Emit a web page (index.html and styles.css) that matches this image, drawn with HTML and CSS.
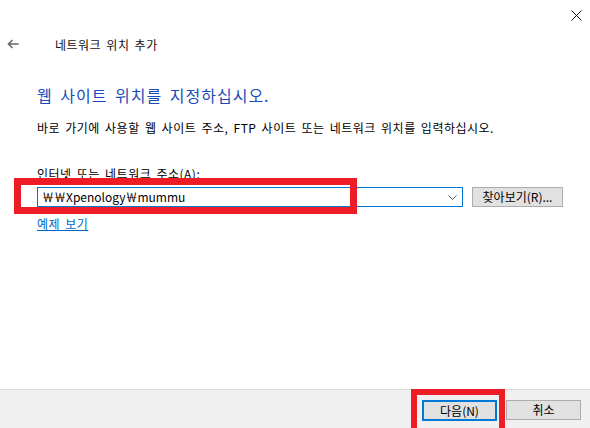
FILE: index.html
```html
<!DOCTYPE html>
<html>
	<head>
		<title>네트워크 위치 추가</title>
		<meta http-equiv="Content-Type" content="text/html; charset=UTF-8">
		<link rel="stylesheet" href="styles.css">
	</head>

	<body>
		<div class="window">
			<div class="titlebar">
				<svg class="close" width="11" height="11" viewBox="0 0 11 11">
					<path d="M0.5 0.5L10.5 10.5M10.5 0.5L0.5 10.5" fill="none" stroke="#111" stroke-width="1"/>
				</svg>
			</div>
			<div class="nav">
				<svg class="back" width="12" height="10" viewBox="0 0 12 10">
					<path d="M11.5 5H1.5M5.5 1L1.5 5L5.5 9" fill="none" stroke="#666" stroke-width="1.6"/>
				</svg>
				<span class="navTitle">네트워크 위치 추가</span>
			</div>

			<div class="content">
				<h1 class="mainInstr">웹 사이트 위치를 지정하십시오.</h1>
				<p class="desc">바로 가기에 사용할 웹 사이트 주소, FTP 사이트 또는 네트워크 위치를 입력하십시오.</p>
				<div class="field">
					<label class="fieldLabel">인터넷 또는 네트워크 주소(A):</label>
					<div class="row">
						<div class="combo">
							<span class="comboText">&#xFFE6;&#xFFE6;Xpenology&#xFFE6;mummu</span>
							<svg class="chevron" width="9" height="5" viewBox="0 0 9 5">
								<path d="M0.5 0.5L4.5 4.5L8.5 0.5" fill="none" stroke="#555" stroke-width="1"/>
							</svg>
						</div>
						<button class="btn browse">찾아보기(R)...</button>
					</div>
					<a class="example" href="#">예제 보기</a>
					<div class="mark markAddr"></div>
				</div>
			</div>

			<div class="footer">
				<div class="btnWrap">
					<button class="btn btnDefault">다음(N)</button>
					<div class="mark markNext"></div>
				</div>
				<button class="btn">취소</button>
			</div>
		</div>
	</body>
</html>
```

FILE: styles.css
```css
html, body {
	margin: 0;
	padding: 0;
	background: #fff;
}

body {
	font-family: "Noto Sans CJK KR", "Noto Sans", sans-serif;
	font-size: 12px;
	color: #000;
	letter-spacing: 0.5px;
	word-spacing: 2px;
}

.window {
	width: 590px;
	height: 428px;
	display: flex;
	flex-direction: column;
	overflow: hidden;
}

.titlebar {
	height: 30px;
	display: flex;
	justify-content: flex-end;
	align-items: flex-start;
	padding-right: 8px;
}

.close {
	display: block;
	margin-top: 10px;
}

.nav {
	height: 28px;
	display: flex;
	align-items: center;
	padding-left: 7px;
}

.back {
	display: block;
}

.navTitle {
	margin-left: 36px;
	font-size: 12px;
	color: #111;
}

.content {
	flex: 1;
	padding-left: 37px;
}

.mainInstr {
	margin: 26px 0 0 0;
	font-size: 16px;
	font-weight: normal;
	line-height: 22px;
	color: #1a4bb8;
	letter-spacing: 1px;
	word-spacing: 3px;
}

.desc {
	margin: 13px 0 0 0;
	line-height: 17px;
}

.field {
	position: relative;
	margin-top: 29px;
}

.fieldLabel {
	display: block;
	line-height: 17px;
}

.row {
	display: flex;
	align-items: center;
	margin-top: 5px;
}

.combo {
	height: 18px;
	border: 1px solid #0078d7;
	display: flex;
	align-items: center;
	justify-content: space-between;
	padding: 0 4px 0 4px;
	box-sizing: content-box;
	width: 416px;
}

.comboText {
	line-height: 18px;
	font-size: 12px;
	letter-spacing: 0;
}

.chevron {
	display: block;
	margin-right: 1px;
}

.btn {
	font-family: inherit;
	font-size: 12px;
	color: #000;
	background: #e1e1e1;
	border: 1px solid #adadad;
	border-radius: 0;
	height: 20px;
	padding: 0;
	line-height: 16px;
	width: 75px;
}

.browse {
	width: 91px;
	margin-left: 9px;
}

.example {
	display: inline-block;
	margin-top: 9px;
	color: #0066cc;
	text-decoration: underline;
	line-height: 15px;
}

.mark {
	position: absolute;
	border: 7px solid #ee1c25;
	box-sizing: border-box;
}

.markAddr {
	left: -23px;
	top: 13px;
	width: 343px;
	height: 36px;
}

.footer {
	border-top: 1px solid #dadada;
	background: #f0f0f0;
	display: flex;
	justify-content: flex-end;
	align-items: flex-start;
	padding: 10px 9px 0 0;
	box-sizing: border-box;
	height: 39px;
	gap: 9px;
}

.btnWrap {
	position: relative;
}

.btnDefault {
	border: 2px solid #0078d7;
	display: block;
	height: 21px;
}

.markNext {
	left: -11px;
	top: -11px;
	width: 94px;
	height: 45px;
	border-width: 6px;
}
```
